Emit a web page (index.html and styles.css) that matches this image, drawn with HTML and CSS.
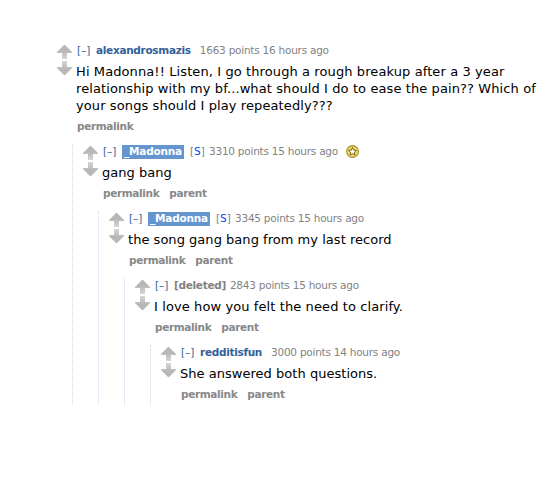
FILE: index.html
```html
<!DOCTYPE html>
<html lang="en">
<head>
<meta charset="utf-8">
<title>Comments</title>
<link rel="stylesheet" href="styles.css">
</head>
<body>
<svg width="0" height="0" class="defs" aria-hidden="true">
  <defs>
    <linearGradient id="g" x1="0" y1="0" x2="0" y2="1"><stop offset="0.4" stop-color="#b7b7b7"/><stop offset="1" stop-color="#d6d6d6"/></linearGradient>
    <symbol id="arrows" viewBox="0 0 15 32">
      <path fill="url(#g)" d="M7 0H8L15 7V8H10V14H5V8H0V7Z"/>
      <path fill="url(#g)" transform="matrix(1 0 0 -1 0 30)" d="M7 0H8L15 7V8H10V14H5V8H0V7Z"/>
    </symbol>
  </defs>
</svg>
<main class="thread">
  <article class="comment root">
    <svg class="votes"><use href="#arrows"/></svg>
    <div class="entry">
      <header class="tagline"><a class="toggle">[–]</a><a class="author">alexandrosmazis</a><span class="score wide">1663 points 16 hours ago</span></header>
      <p class="text loose">Hi Madonna!! Listen, I go through a rough breakup after a 3 year<br>relationship with my bf...what should I do to ease the pain?? Which of<br>your songs should I play repeatedly???</p>
      <footer class="links"><a>permalink</a></footer>
      <article class="comment">
        <svg class="votes"><use href="#arrows"/></svg>
        <div class="entry">
          <header class="tagline"><a class="toggle">[–]</a><a class="author submitter">_Madonna</a><span class="flag">[<b>S</b>]</span><span class="score">3310 points 15 hours ago</span><svg class="gold" viewBox="0 0 13 13"><circle cx="6.5" cy="6.5" r="5.9" fill="#f2dc60" stroke="#a28c37" stroke-width="1.1"/><path d="M6.5 2.5L7.7 5.1L10.4 5.4L8.4 7.3L9 10.1L6.5 8.7L4 10.1L4.6 7.3L2.6 5.4L5.3 5.1Z" fill="#fffdf0" stroke="#75602a" stroke-width="1"/></svg></header>
          <p class="text">gang bang</p>
          <footer class="links"><a>permalink</a><a>parent</a></footer>
          <article class="comment">
            <svg class="votes"><use href="#arrows"/></svg>
            <div class="entry">
              <header class="tagline"><a class="toggle">[–]</a><a class="author submitter">_Madonna</a><span class="flag">[<b>S</b>]</span><span class="score">3345 points 15 hours ago</span></header>
              <p class="text">the song gang bang from my last record</p>
              <footer class="links"><a>permalink</a><a>parent</a></footer>
              <article class="comment">
                <svg class="votes"><use href="#arrows"/></svg>
                <div class="entry">
                  <header class="tagline"><a class="toggle">[–]</a><span class="author deleted">[deleted]</span><span class="score">2843 points 15 hours ago</span></header>
                  <p class="text loose">I love how you felt the need to clarify.</p>
                  <footer class="links"><a>permalink</a><a>parent</a></footer>
                  <article class="comment">
                    <svg class="votes"><use href="#arrows"/></svg>
                    <div class="entry">
                      <header class="tagline"><a class="toggle">[–]</a><a class="author">redditisfun</a><span class="score wide">3000 points 14 hours ago</span></header>
                      <p class="text">She answered both questions.</p>
                      <footer class="links"><a>permalink</a><a>parent</a></footer>
                    </div>
                  </article>
                </div>
              </article>
            </div>
          </article>
        </div>
      </article>
    </div>
  </article>
</main>
</body>
</html>
```

FILE: styles.css
```css
body { margin: 0; background: #fff; font-family: Verdana, "DejaVu Sans", sans-serif; }
.defs { display: block; }
.thread { padding: 43px 0 0 46px; }
.comment { display: flex; margin: 7px 0 0 -4px; padding-left: 10px; border-left: 1px dotted #d4d4f0; }
.root { margin: 0; border-left-color: transparent; }
.votes { flex: none; width: 15px; height: 32px; margin: 2px 4px 0 0; }
.entry { flex: 1; min-width: 0; }
.tagline { display: flex; align-items: center; height: 15px; padding-left: 1px; font-size: 10.5px; line-height: 13px; color: #828282; white-space: nowrap; }
.tagline > * { margin-top: -1px; }
.toggle { width: 19px; color: #369; }
.author { font-weight: bold; color: #336199; letter-spacing: -.3px; }
.tagline .submitter { box-sizing: border-box; width: 62px; height: 14px; margin-top: 1px; padding: 0 2px; line-height: 12px; background: #6495cf; color: #fff; letter-spacing: -.2px; }
.deleted { color: #828282; }
.flag { width: 19px; margin-left: 6px; }
.flag b { color: #0045ff; font-weight: normal; }
.score { margin-left: 4px; letter-spacing: -.24px; }
.flag + .score { margin-left: 0; }
.score.wide { margin-left: 9px; }
.tagline .gold { width: 13px; height: 13px; margin: 0 0 0 8px; }
.text { margin: 5px 0 0; font-size: 13px; line-height: 17px; color: #000; white-space: nowrap; letter-spacing: .03px; }
.loose { letter-spacing: .1px; }
.links { display: flex; gap: 10px; height: 17px; margin-top: 6px; padding-left: 1px; font-size: 10.5px; line-height: 13px; font-weight: bold; color: #888; letter-spacing: -.35px; }
```
